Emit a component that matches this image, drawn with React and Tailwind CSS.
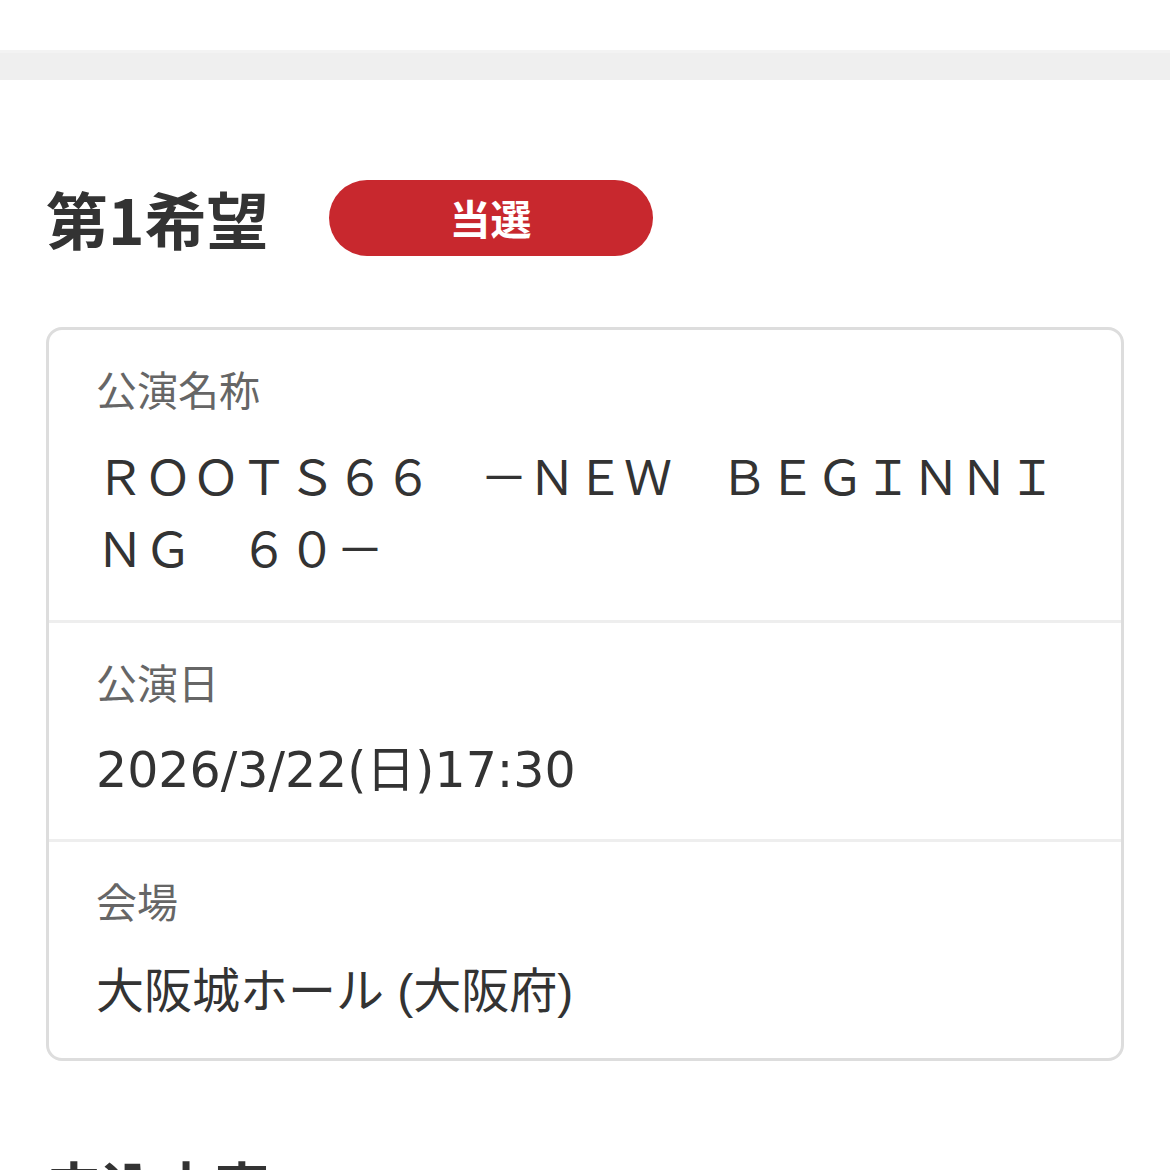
import React from 'react';

const jp = { fontFamily: '"Noto Sans CJK JP", "Noto Sans", sans-serif' };
const digits = { fontFamily: '"DejaVu Sans", "Noto Sans CJK JP", sans-serif', fontSize: '49px' };
const latin = { fontFamily: '"Liberation Sans", "Noto Sans CJK JP", sans-serif' };

const rows = [
  { label: '公演名称', value: 'ＲＯＯＴＳ６６　－ＮＥＷ　ＢＥＧＩＮＮＩＮＧ　６０－', gap: 'mt-[18px]', pad: 'pb-[38px]' },
  { label: '公演日', value: '2026/3/22(日)17:30', gap: 'mt-[22px]', pad: 'pb-[32px]', font: digits },
  { label: '会場', value: '大阪城ホール (大阪府)', gap: 'mt-[24px]', pad: 'pb-[30px]', font: latin },
];

const InfoRow = ({ label, value, gap, pad, font, first }) => (
  <div className={`px-[47px] pt-[26px] ${pad} ${first ? '' : 'border-t-[3px] border-[#eeeeee]'}`}>
    <div className="text-[41px] leading-[64px] text-[#666666]">{label}</div>
    <div className={`${gap} text-[48px] leading-[72px] text-[#333333] break-all`} style={font}>
      {value}
    </div>
  </div>
);

const App = () => {
  return (
    <div className="bg-white w-[1170px] h-[1170px] overflow-hidden" style={jp}>
      <div className="h-[50px]" />
      <div className="h-[30px] bg-[#efefef] border-t-[3px] border-[#f3f3f3]" />

      <div className="px-[46px] pt-[100px]">
        <div className="flex items-center gap-[60px]">
          <h2 className="text-[62px] font-bold text-[#333333] leading-none">第1希望</h2>
          <span className="w-[324px] h-[76px] rounded-full bg-[#c8282e] text-white text-[41px] font-bold flex items-center justify-center">
            当選
          </span>
        </div>

        <div className="mt-[71px] w-[1078px] border-[3px] border-[#dddddd] rounded-[16px]">
          {rows.map((r, i) => (
            <InfoRow key={r.label} {...r} first={i === 0} />
          ))}
        </div>

        <h2 className="mt-[96px] text-[56px] font-bold text-[#333333] leading-none">申込内容</h2>
      </div>
    </div>
  );
};

export default App;
